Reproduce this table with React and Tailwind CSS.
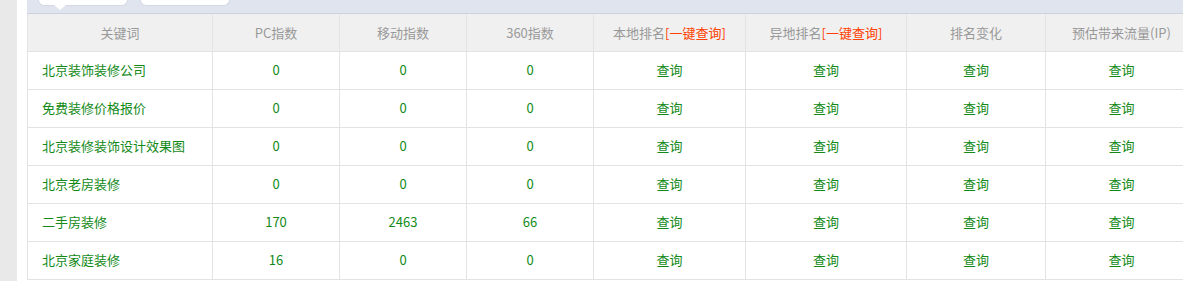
import React from "react";

const cols = [
  { w: 185 },
  { w: 127 },
  { w: 127 },
  { w: 127 },
  { w: 152 },
  { w: 161 },
  { w: 139 },
  { w: 152 },
];

const rows = [
  ["北京装饰装修公司", "0", "0", "0"],
  ["免费装修价格报价", "0", "0", "0"],
  ["北京装修装饰设计效果图", "0", "0", "0"],
  ["北京老房装修", "0", "0", "0"],
  ["二手房装修", "170", "2463", "66"],
  ["北京家庭装修", "16", "0", "0"],
];

const font = { fontFamily: '"Microsoft YaHei", "Noto Sans CJK SC", "Noto Sans", sans-serif' };

export default function App() {
  return (
    <div className="flex w-[1183px] h-[281px] overflow-hidden bg-white text-[13px]" style={font}>
      <div className="w-[17px] shrink-0 bg-[#e9e9e9]" />
      <div className="w-[10px] shrink-0 bg-white" />
      <div className="flex-1 overflow-hidden">
        <div className="relative h-[14px] bg-[#dfe4ee] border-b border-[#cdd3de] flex pl-[11px] gap-[12px]">
          <div className="w-[90px] h-[6px] bg-white rounded-b-[6px] border border-t-0 border-[#d4d9e3]" />
          <div className="w-[90px] h-[6px] bg-white rounded-b-[6px] border border-t-0 border-[#d4d9e3]" />
          <div className="absolute left-[27px] top-[5px] w-0 h-0 border-l-[6px] border-r-[6px] border-t-[5px] border-l-transparent border-r-transparent border-t-white" />
        </div>
        <table className="border-collapse table-fixed w-[1170px]">
          <colgroup>
            {cols.map((c, i) => (
              <col key={i} style={{ width: c.w }} />
            ))}
          </colgroup>
          <thead>
            <tr className="h-[37px] bg-[#f0f0f0] text-[#999999]">
              <th className="font-normal border-l border-r border-b border-[#e3e3e3] text-center">关键词</th>
              <th className="font-normal border-r border-b border-[#e3e3e3] text-center">PC指数</th>
              <th className="font-normal border-r border-b border-[#e3e3e3] text-center">移动指数</th>
              <th className="font-normal border-r border-b border-[#e3e3e3] text-center">360指数</th>
              <th className="font-normal border-r border-b border-[#e3e3e3] text-center">
                本地排名<span className="text-[#ff4000]">[一键查询]</span>
              </th>
              <th className="font-normal border-r border-b border-[#e3e3e3] text-center">
                异地排名<span className="text-[#ff4000]">[一键查询]</span>
              </th>
              <th className="font-normal border-r border-b border-[#e3e3e3] text-center">排名变化</th>
              <th className="font-normal border-r border-b border-[#e3e3e3] text-center">预估带来流量(IP)</th>
            </tr>
          </thead>
          <tbody>
            {rows.map((r, i) => (
              <tr key={i} className="h-[38px] text-[#138a18]">
                <td className="border-l border-r border-b border-[#e3e3e3] pl-[14px] text-left">{r[0]}</td>
                <td className="border-r border-b border-[#e3e3e3] text-center">{r[1]}</td>
                <td className="border-r border-b border-[#e3e3e3] text-center">{r[2]}</td>
                <td className="border-r border-b border-[#e3e3e3] text-center">{r[3]}</td>
                <td className="border-r border-b border-[#e3e3e3] text-center">查询</td>
                <td className="border-r border-b border-[#e3e3e3] text-center">查询</td>
                <td className="border-r border-b border-[#e3e3e3] text-center">查询</td>
                <td className="border-r border-b border-[#e3e3e3] text-center">查询</td>
              </tr>
            ))}
          </tbody>
        </table>
      </div>
    </div>
  );
}
